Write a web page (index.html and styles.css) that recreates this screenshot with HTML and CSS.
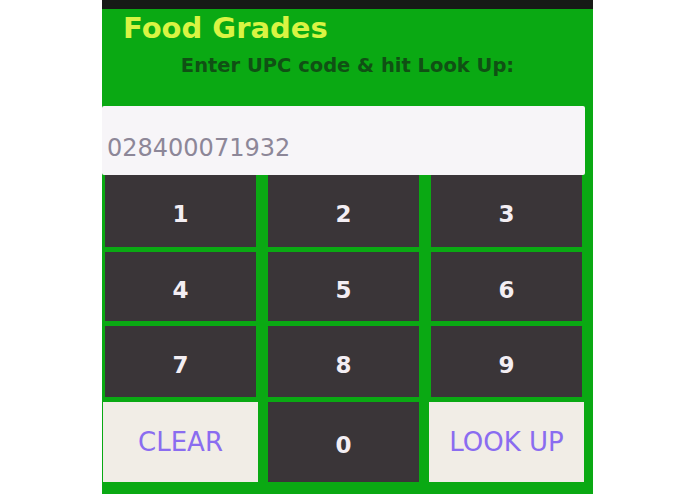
FILE: index.html
```html
<!DOCTYPE html>
<html>
<head>
<meta charset="utf-8">
<link rel="stylesheet" href="styles.css">
</head>
<body>
<div class="screen">
  <div class="statusbar"></div>
  <div class="header">
    <div class="title">Food Grades</div>
    <div class="subtitle">Enter UPC code &amp; hit Look Up:</div>
  </div>
  <div class="field">028400071932</div>
  <div class="keypad">
    <div class="key">1</div>
    <div class="key">2</div>
    <div class="key">3</div>
    <div class="key">4</div>
    <div class="key">5</div>
    <div class="key">6</div>
    <div class="key">7</div>
    <div class="key">8</div>
    <div class="key">9</div>
    <div class="key light">CLEAR</div>
    <div class="key">0</div>
    <div class="key light">LOOK UP</div>
  </div>
</div>
</body>
</html>
```

FILE: styles.css
```css
html, body {
  margin: 0;
  padding: 0;
  background: #ffffff;
}
body {
  width: 695px;
  height: 494px;
  overflow: hidden;
  font-family: "DejaVu Sans", sans-serif;
}
.screen {
  margin-left: 102px;
  width: 491px;
  height: 494px;
  background: #0aa913;
  display: flex;
  flex-direction: column;
}
.statusbar {
  height: 9px;
  background: #161a16;
}
.header {
  height: 97px;
  display: flex;
  flex-direction: column;
}
.title {
  margin-top: 1px;
  padding-left: 21px;
  height: 36px;
  line-height: 36px;
  font-size: 29px;
  font-weight: bold;
  color: #d9f443;
}
.subtitle {
  margin-top: 8px;
  height: 24px;
  line-height: 24px;
  text-align: center;
  font-size: 19.5px;
  font-weight: bold;
  color: #105014;
}
.field {
  width: 483px;
  height: 69px;
  box-sizing: border-box;
  padding: 15px 0 0 5px;
  display: flex;
  align-items: center;
  background: #f7f5f8;
  color: #8d8798;
  font-size: 24px;
  border-radius: 2px;
}
.keypad {
  margin: 0 11px 0 3px;
  display: grid;
  grid-template-columns: 1fr 1fr 1fr;
  grid-template-rows: 72px 69px 71px 80px;
  column-gap: 12px;
  row-gap: 5px;
}
.key {
  background: #3a3538;
  color: #f3eef3;
  font-size: 23px;
  font-weight: bold;
  display: flex;
  align-items: center;
  justify-content: center;
  padding-top: 6px;
  box-sizing: border-box;
}
.key.light {
  background: #f1ede6;
  color: #8a6cf0;
  font-weight: normal;
  font-size: 26px;
  padding-top: 0;
  margin: 0 -2px 0 -2px;
}
```
